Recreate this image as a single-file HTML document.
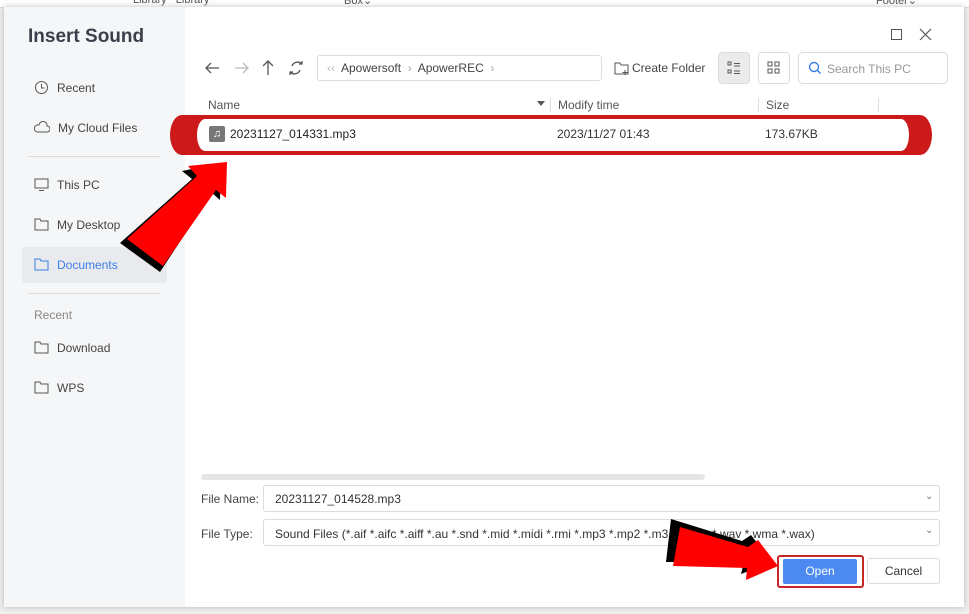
<!DOCTYPE html>
<html><head><meta charset="utf-8"><style>
*{margin:0;padding:0;box-sizing:border-box}
body{width:969px;height:614px;overflow:hidden;background:#f0f0f0;font-family:"Liberation Sans",sans-serif;position:relative;color:#333}
.a{position:absolute}
.dlg{left:4px;top:7px;width:960px;height:600px;background:#fff;box-shadow:0 0 6px rgba(0,0,0,.25)}
.side{left:4px;top:7px;width:181px;height:600px;background:#f5f6f8}
.it{position:absolute;left:34px;font-size:12px;color:#444;display:flex;align-items:center}
.it svg{margin-right:8px}
.t12{font-size:12px}
.box{border:1px solid #dcdcdc;border-radius:3px;background:#fff}
</style></head><body>
<div class="a" style="left:0;top:0;width:969px;height:8px;background:#fff;border-bottom:1px solid #ddd"></div>
<div class="a t12" style="left:133px;top:-6px;font-size:11px;color:#555">Library&nbsp;&nbsp;&nbsp;Library</div>
<div class="a t12" style="left:344px;top:-6px;font-size:11px;color:#555">Box⌄</div>
<div class="a t12" style="left:876px;top:-6px;font-size:11px;color:#555">Footer⌄</div>
<div class="a dlg"></div>
<div class="a side"></div>
<div class="a" style="left:28px;top:26px;font-size:19px;font-weight:bold;color:#3a3f4a">Insert Sound</div>
<div class="it" style="top:80px"><svg width="15" height="15"><circle cx="7.5" cy="7.5" r="6" fill="none" stroke="#555"/><path d="M7.5 4v4h3" fill="none" stroke="#555"/></svg>Recent</div>
<div class="it" style="top:120px"><svg width="16" height="15"><path d="M3 12h10a3 3 0 0 0 0-6 4 4 0 0 0-8-1 3.5 3.5 0 0 0-2 7z" fill="none" stroke="#555"/></svg>My Cloud Files</div>
<div class="a" style="left:28px;top:156px;width:132px;height:1px;background:#ddd"></div>
<div class="it" style="top:177px"><svg width="15" height="15"><rect x="1" y="2" width="13" height="9" fill="none" stroke="#555"/><path d="M5 13.5h5" stroke="#555"/></svg>This PC</div>
<div class="it" style="top:217px"><svg width="15" height="15"><path d="M1 2h5l1 2h7v9H1z" fill="none" stroke="#555"/></svg>My Desktop</div>
<div class="a" style="left:22px;top:247px;width:145px;height:36px;background:#e8eaed;border-radius:3px"></div>
<div class="it" style="top:257px;color:#3b7de8"><svg width="15" height="15"><path d="M1 2h5l1 2h7v9H1z" fill="none" stroke="#3b7de8"/></svg>Documents</div>
<div class="a" style="left:28px;top:293px;width:132px;height:1px;background:#ddd"></div>
<div class="a t12" style="left:34px;top:308px;color:#888">Recent</div>
<div class="it" style="top:340px"><svg width="15" height="15"><path d="M1 2h5l1 2h7v9H1z" fill="none" stroke="#555"/></svg>Download</div>
<div class="it" style="top:380px"><svg width="15" height="15"><path d="M1 2h5l1 2h7v9H1z" fill="none" stroke="#555"/></svg>WPS</div>
<div class="a" style="left:891px;top:29px;width:11px;height:11px;border:1px solid #555"></div>
<svg class="a" style="left:919px;top:28px" width="13" height="13"><path d="M1 1l11 11M12 1L1 12" stroke="#555" stroke-width="1.2"/></svg>
<svg class="a" style="left:203px;top:58px" width="110" height="20"><g fill="none" stroke="#555" stroke-width="1.3"><path d="M3 10h13M8 5l-5 5 5 5"/><path d="M32 10h13M40 5l5 5-5 5" stroke="#bbb"/><path d="M65 3v14M60 8l5-5 5 5"/><path d="M99 6a6 6 0 0 0-10 2M87 14a6 6 0 0 0 10-2M99 3v3h-3M87 17v-3h3"/></g></svg>
<div class="a box" style="left:317px;top:55px;width:285px;height:26px"></div>
<div class="a t12" style="left:327px;top:61px;color:#444"><span style="color:#bbb">‹‹</span>&nbsp; Apowersoft &nbsp;<span style="color:#aaa">›</span>&nbsp; ApowerREC &nbsp;<span style="color:#aaa">›</span></div>
<svg class="a" style="left:614px;top:60px" width="16" height="16"><path d="M1 3h5l1 2h7v9H1z" fill="none" stroke="#555"/><path d="M11 10v5M8.5 12.5h5" stroke="#555"/></svg>
<div class="a t12" style="left:632px;top:61px;color:#444">Create Folder</div>
<div class="a" style="left:718px;top:52px;width:32px;height:32px;background:#ebebeb;border:1px solid #ddd;border-radius:4px"></div>
<svg class="a" style="left:727px;top:61px" width="14" height="14"><g fill="none" stroke="#555"><rect x="1" y="1" width="3" height="3"/><rect x="1" y="9" width="3" height="3"/><path d="M7 2.5h6M7 5h6M7 10h6M7 12.5h6"/></g></svg>
<div class="a box" style="left:758px;top:52px;width:32px;height:32px;border-radius:4px"></div>
<svg class="a" style="left:767px;top:61px" width="14" height="14"><g fill="none" stroke="#555"><rect x="1" y="1" width="4" height="4"/><rect x="8" y="1" width="4" height="4"/><rect x="1" y="8" width="4" height="4"/><rect x="8" y="8" width="4" height="4"/></g></svg>
<div class="a box" style="left:798px;top:52px;width:150px;height:32px;border-radius:5px"></div>
<svg class="a" style="left:808px;top:61px" width="14" height="14"><circle cx="6" cy="6" r="4.5" fill="none" stroke="#3b7de8" stroke-width="1.4"/><path d="M9.5 9.5l3 3" stroke="#3b7de8" stroke-width="1.4"/></svg>
<div class="a t12" style="left:827px;top:62px;color:#999">Search This PC</div>
<div class="a t12" style="left:208px;top:98px;color:#555">Name</div>
<div class="a" style="left:537px;top:101px;border:4px solid transparent;border-top:5px solid #555"></div>
<div class="a" style="left:550px;top:98px;width:1px;height:14px;background:#ddd"></div>
<div class="a t12" style="left:558px;top:98px;color:#555">Modify time</div>
<div class="a" style="left:758px;top:98px;width:1px;height:14px;background:#ddd"></div>
<div class="a t12" style="left:766px;top:98px;color:#555">Size</div>
<div class="a" style="left:878px;top:98px;width:1px;height:14px;background:#ddd"></div>
<div class="a" style="left:170px;top:115px;width:762px;height:40px;background:#cc1a1a;border-radius:12px/20px"></div>
<div class="a" style="left:197px;top:119px;width:712px;height:32px;background:#fff;border-radius:8px/16px"></div>
<div class="a" style="left:209px;top:126px;width:16px;height:16px;background:#777;border-radius:2px;color:#fff;font-size:11px;text-align:center;line-height:16px">♫</div>
<div class="a t12" style="left:230px;top:127px;color:#222">20231127_014331.mp3</div>
<div class="a t12" style="left:557px;top:127px;color:#333">2023/11/27 01:43</div>
<div class="a t12" style="left:765px;top:127px;color:#333">173.67KB</div>
<svg class="a" style="left:0;top:0" width="969" height="614"><polygon points="182,171 221,163 220,200 212,193 160,272 120,243 192,179" fill="#000"/><polygon points="188,166 227,162 226,198 216,190 163,266 127,239 197,176" fill="#f00"/></svg>
<div class="a" style="left:201px;top:474px;width:504px;height:6px;background:#e5e5e5;border-radius:3px"></div>
<div class="a t12" style="left:201px;top:492px;color:#444">File Name:</div>
<div class="a box" style="left:263px;top:485px;width:677px;height:27px"></div>
<div class="a t12" style="left:275px;top:492px;color:#333">20231127_014528.mp3</div>
<div class="a" style="left:925px;top:491px;font-size:10px;color:#777">⌄</div>
<div class="a t12" style="left:201px;top:527px;color:#444">File Type:</div>
<div class="a box" style="left:263px;top:519px;width:677px;height:27px"></div>
<div class="a t12" style="left:275px;top:527px;color:#333;white-space:nowrap">Sound Files (*.aif *.aifc *.aiff *.au *.snd *.mid *.midi *.rmi *.mp3 *.mp2 *.m3</div>
<div class="a t12" style="left:712px;top:527px;color:#333">*.wav *.wma *.wax)</div>
<div class="a" style="left:925px;top:525px;font-size:10px;color:#777">⌄</div>
<div class="a" style="left:777px;top:555px;width:87px;height:33px;border:2px solid #c62828;border-radius:3px"></div>
<div class="a" style="left:783px;top:559px;width:74px;height:25px;background:#4c8af2;border-radius:2px;color:#fff;font-size:12px;text-align:center;line-height:25px">Open</div>
<div class="a box" style="left:867px;top:558px;width:73px;height:26px;font-size:12px;text-align:center;line-height:24px;color:#333">Cancel</div>
<svg class="a" style="left:0;top:0" width="969" height="614"><polygon points="671,519 742,541 751,535 772,562 741,574 744,562 666,562" fill="#000"/><polygon points="680,527 748,547 758,540 778,566 746,580 747,568 673,566" fill="#f00"/></svg>
</body></html>
